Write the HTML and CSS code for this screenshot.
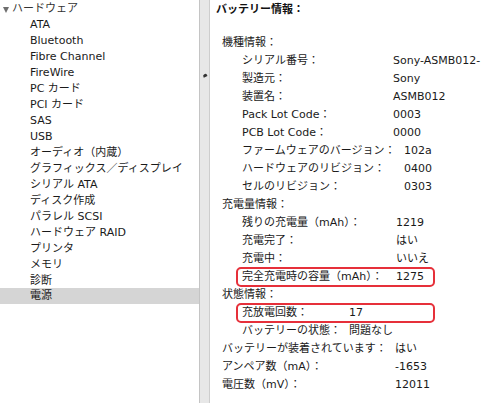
FILE: index.html
```html
<!DOCTYPE html>
<html lang="ja">
<head>
<meta charset="utf-8">
<title>システムプロファイラ - 電源</title>
<link rel="stylesheet" href="styles.css">
</head>
<body>
<div class="window">
  <div class="sidebar">
    <div class="group-head"><span class="tri"></span>ハードウェア</div>
    <div class="item">ATA</div>
    <div class="item">Bluetooth</div>
    <div class="item">Fibre Channel</div>
    <div class="item">FireWire</div>
    <div class="item">PC カード</div>
    <div class="item">PCI カード</div>
    <div class="item">SAS</div>
    <div class="item">USB</div>
    <div class="item">オーディオ（内蔵）</div>
    <div class="item">グラフィックス／ディスプレイ</div>
    <div class="item">シリアル ATA</div>
    <div class="item">ディスク作成</div>
    <div class="item">パラレル SCSI</div>
    <div class="item">ハードウェア RAID</div>
    <div class="item">プリンタ</div>
    <div class="item">メモリ</div>
    <div class="item">診断</div>
    <div class="item selected">電源</div>
  </div>
  <div class="splitter"><span class="grip"></span></div>
  <div class="main">
    <div class="title">バッテリー情報：</div>
    <div class="row top"><span>機種情報：</span></div>
    <div class="row sub"><span class="lbl w151">シリアル番号：</span><span>Sony-ASMB012-</span></div>
    <div class="row sub"><span class="lbl w151">製造元：</span><span>Sony</span></div>
    <div class="row sub"><span class="lbl w151">装置名：</span><span>ASMB012</span></div>
    <div class="row sub"><span class="lbl w151">Pack Lot Code：</span><span>0003</span></div>
    <div class="row sub"><span class="lbl w151">PCB Lot Code：</span><span>0000</span></div>
    <div class="row sub"><span class="lbl w162">ファームウェアのバージョン：</span><span>102a</span></div>
    <div class="row sub"><span class="lbl w162">ハードウェアのリビジョン：</span><span>0400</span></div>
    <div class="row sub"><span class="lbl w162">セルのリビジョン：</span><span>0303</span></div>
    <div class="row top"><span>充電量情報：</span></div>
    <div class="row sub"><span class="lbl w154">残りの充電量（mAh）：</span><span>1219</span></div>
    <div class="row sub"><span class="lbl w154">充電完了：</span><span>はい</span></div>
    <div class="row sub"><span class="lbl w154">充電中：</span><span>いいえ</span></div>
    <div class="row sub mark"><span class="lbl w154">完全充電時の容量（mAh）：</span><span>1275</span></div>
    <div class="row top"><span>状態情報：</span></div>
    <div class="row sub mark"><span class="lbl w107">充放電回数：</span><span>17</span></div>
    <div class="row sub"><span class="lbl w107">バッテリーの状態：</span><span>問題なし</span></div>
    <div class="row top"><span class="lbl w173">バッテリーが装着されています：</span><span>はい</span></div>
    <div class="row top"><span class="lbl w173">アンペア数（mA）：</span><span>-1653</span></div>
    <div class="row top"><span class="lbl w173">電圧数（mV）：</span><span>12011</span></div>
  </div>
</div>
</body>
</html>
```
FILE: styles.css
```css
html, body {
  margin: 0;
  padding: 0;
  background: #ffffff;
}
body {
  font-family: "DejaVu Sans", "Noto Sans CJK JP", sans-serif;
  font-size: 11px;
  color: #1a1a1a;
  overflow: hidden;
  width: 489px;
  height: 403px;
}
.window {
  display: flex;
  height: 403px;
}
.sidebar {
  width: 199px;
  flex: none;
  padding-top: 2px;
  background: #ffffff;
}
.group-head {
  height: 16px;
  line-height: 16px;
  display: flex;
  align-items: center;
  padding-left: 3px;
  margin-top: -1px;
  color: #333;
}
.tri {
  width: 0;
  height: 0;
  border-left: 3.5px solid transparent;
  border-right: 3.5px solid transparent;
  border-top: 6px solid #6e6e6e;
  margin-right: 3px;
  margin-top: 1px;
}
.item {
  height: 16px;
  line-height: 16px;
  padding-left: 30px;
  white-space: nowrap;
}
.item.selected {
  background: #d5d5d5;
  margin-top: -1px;
  height: 15px;
  padding-top: 1px;
  line-height: 14px;
}
.splitter {
  width: 9px;
  flex: none;
  background: #e7e7e7;
  border-left: 1px solid #c4c4c4;
  border-right: 1px solid #cdcdcd;
  display: flex;
  justify-content: center;
  padding-top: 74px;
  box-sizing: content-box;
}
.grip {
  width: 4px;
  height: 3px;
  background: #333;
  border-radius: 2px 2px 0 0;
  transform: rotate(-25deg);
}
.main {
  flex: 1;
  min-width: 0;
  white-space: nowrap;
  overflow: hidden;
}
.title {
  font-weight: bold;
  line-height: 18px;
  padding-left: 6px;
  margin-top: 1px;
  margin-bottom: 15px;
  color: #111;
}
.row {
  display: flex;
  height: 18px;
  line-height: 18px;
}
.row.top {
  padding-left: 12px;
}
.row.sub {
  padding-left: 32px;
}
.lbl {
  flex: none;
}
.w107 { width: 107px; }
.w151 { width: 151px; }
.w154 { width: 154px; }
.w162 { width: 162px; }
.w173 { width: 173px; }
.row.mark {
  width: 191px;
  margin: -1px 0 -1px 26px;
  padding-left: 4px;
  height: 16px;
  line-height: 16px;
  border: 2px solid #e6303a;
  border-radius: 5px;
}
```
